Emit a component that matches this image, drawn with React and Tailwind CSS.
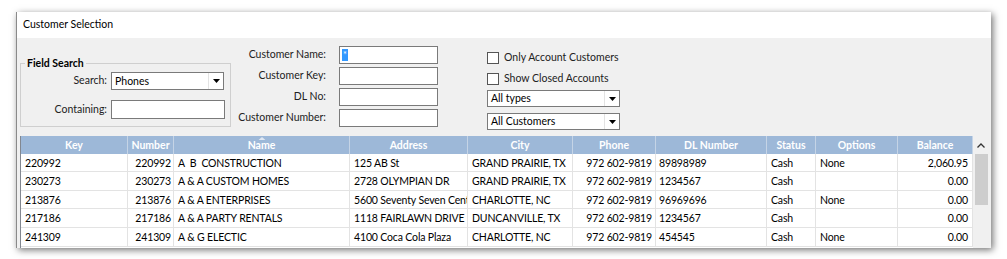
const FONT = "font-['Segoe_UI','Lato','Noto_Sans',sans-serif]"

const columns = [
  { label: 'Key', w: 'w-[107px]', align: 'text-left pl-[4px]' },
  { label: 'Number', w: 'w-[46px]', align: 'text-right pr-[2px]' },
  { label: 'Name', w: 'w-[176px]', align: 'text-left pl-[4px]', sorted: true },
  { label: 'Address', w: 'w-[118px]', align: 'text-left pl-[4px]' },
  { label: 'City', w: 'w-[105px]', align: 'text-left pl-[4px]' },
  { label: 'Phone', w: 'w-[83px]', align: 'text-right pr-[3px]' },
  { label: 'DL Number', w: 'w-[111px]', align: 'text-left pl-[3px]' },
  { label: 'Status', w: 'w-[49px]', align: 'text-left pl-[4px]' },
  { label: 'Options', w: 'w-[82px]', align: 'text-left pl-[4px]' },
  { label: 'Balance', w: 'w-[75px]', align: 'text-right pr-[4px]' },
]

const rows = [
  { h: 'h-[18px]', cells: ['220992', '220992', 'A  B  CONSTRUCTION', '125 AB St', 'GRAND PRAIRIE, TX', '972 602-9819', '89898989', 'Cash', 'None', '2,060.95'] },
  { h: 'h-[19px]', cells: ['230273', '230273', 'A & A CUSTOM HOMES', '2728 OLYMPIAN DR', 'GRAND PRAIRIE, TX', '972 602-9819', '1234567', 'Cash', '', '0.00'] },
  { h: 'h-[18px]', cells: ['213876', '213876', 'A & A ENTERPRISES', '5600 Seventy Seven Center', 'CHARLOTTE, NC', '972 602-9819', '96969696', 'Cash', 'None', '0.00'] },
  { h: 'h-[19px]', cells: ['217186', '217186', 'A & A PARTY RENTALS', '1118 FAIRLAWN DRIVE', 'DUNCANVILLE, TX', '972 602-9819', '1234567', 'Cash', '', '0.00'] },
  { h: 'h-[19px]', cells: ['241309', '241309', 'A & G ELECTIC', '4100 Coca Cola Plaza', 'CHARLOTTE, NC', '972 602-9819', '454545', 'Cash', 'None', '0.00'] },
]

function Combo({ value, className }) {
  return (
    <div className={`flex items-center bg-white border border-[#7a7a7a] ${className}`}>
      <span className="flex-1 pl-[3px] text-[10.5px] leading-none text-black whitespace-nowrap">{value}</span>
      <span className="w-[15px] h-full flex items-center justify-center border-l border-[#e3e3e3]">
        <svg width="7" height="4" viewBox="0 0 7 4"><path d="M0 0h7L3.5 4z" fill="#000" /></svg>
      </span>
    </div>
  )
}

function TextBox({ className, children }) {
  return <div className={`bg-white border border-[#7a7a7a] flex items-center ${className}`}>{children}</div>
}

function Check({ label }) {
  return (
    <div className="flex items-center h-[21px]">
      <span className="w-[12px] h-[12px] border border-[#555] bg-white" />
      <span className="ml-[5px] text-[10.5px] text-[#222] whitespace-nowrap">{label}</span>
    </div>
  )
}

export default function App() {
  return (
    <div className={`w-[1007px] h-[259px] bg-white pt-[12px] pl-[16px] ${FONT}`}>
      <div className="w-[975px] h-[236px] flex flex-col overflow-hidden border-l border-[#8a8a8a] shadow-[2px_2px_7px_rgba(0,0,0,0.55)]">
        <div className="h-[26px] bg-white flex items-center pl-[6px] text-[10.5px] text-black">Customer Selection</div>

        <div className="flex-1 bg-[#f0f0f0] flex flex-col">
          <div className="h-[98px] flex items-start text-[10.5px] text-[#222]">
            <div className="ml-[3px] mt-[25px] w-[211px] h-[64px] border border-[#cfcfcf] relative">
              <span className="absolute -top-[8px] left-[4px] px-[2px] bg-[#f0f0f0] font-bold text-[10.5px] text-black leading-[14px]">Field Search</span>
              <div className="flex items-center mt-[8px]">
                <span className="w-[86px] text-right">Search:</span>
                <Combo value="Phones" className="ml-[4px] w-[113px] h-[18px]" />
              </div>
              <div className="flex items-center mt-[10px]">
                <span className="w-[86px] text-right">Containing:</span>
                <TextBox className="ml-[4px] w-[114px] h-[19px]" />
              </div>
            </div>

            <div className="mt-[8px] flex flex-col gap-[3px]">
              {['Customer Name:', 'Customer Key:', 'DL No:', 'Customer Number:'].map((l, i) => (
                <div key={l} className="flex items-center">
                  <span className="w-[106px] text-right pr-[11px] whitespace-nowrap">{l}</span>
                  <TextBox className="ml-[2px] w-[99px] h-[18px]">
                    {i === 0 && <span className="ml-[2px] w-[6px] h-[12px] bg-[#3399ff] text-white text-[9px] leading-[12px] text-center">*</span>}
                  </TextBox>
                </div>
              ))}
            </div>

            <div className="ml-[49px] mt-[9px] flex flex-col">
              <Check label="Only Account Customers" />
              <Check label="Show Closed Accounts" />
              <Combo value="All types" className="mt-[1px] w-[133px] h-[17px]" />
              <Combo value="All Customers" className="mt-[6px] w-[133px] h-[17px]" />
            </div>
          </div>

          <div className="ml-[3px] w-[969px] flex-1 bg-white border-l border-[#828790] flex overflow-hidden">
            <div className="flex flex-col">
              <div className="flex h-[18px] bg-[#9db8d8]">
                {columns.map((c) => (
                  <div key={c.label} className={`${c.w} shrink-0 relative flex items-center justify-center pt-[2px] border-r border-[#c5d4e6] text-white font-bold text-[10.5px]`}>
                    {c.sorted && (
                      <svg className="absolute top-[1px] left-1/2 -translate-x-1/2" width="7" height="3" viewBox="0 0 7 3">
                        <path d="M0 3L3.5 0L7 3z" fill="#dfe7f2" />
                      </svg>
                    )}
                    {c.label}
                  </div>
                ))}
              </div>
              {rows.map((r, ri) => (
                <div key={ri} className={`flex ${r.h} border-b border-[#e3e3e3]`}>
                  {r.cells.map((v, ci) => (
                    <div key={ci} className={`${columns[ci].w} ${columns[ci].align} shrink-0 overflow-hidden whitespace-pre border-r border-[#e3e3e3] text-[10.5px] tracking-[-0.15px] text-black leading-[18px]`}>
                      {v}
                    </div>
                  ))}
                </div>
              ))}
            </div>
            <div className="w-[17px] bg-[#f0f0f0] flex flex-col items-center">
              <div className="h-[18px] flex items-center justify-center">
                <svg width="8" height="5" viewBox="0 0 8 5"><path d="M0.5 4.5L4 1L7.5 4.5" fill="none" stroke="#333" strokeWidth="1.3" /></svg>
              </div>
              <div className="w-[13px] h-[51px] bg-[#cdcdcd]" />
            </div>
          </div>
        </div>
      </div>
    </div>
  )
}
